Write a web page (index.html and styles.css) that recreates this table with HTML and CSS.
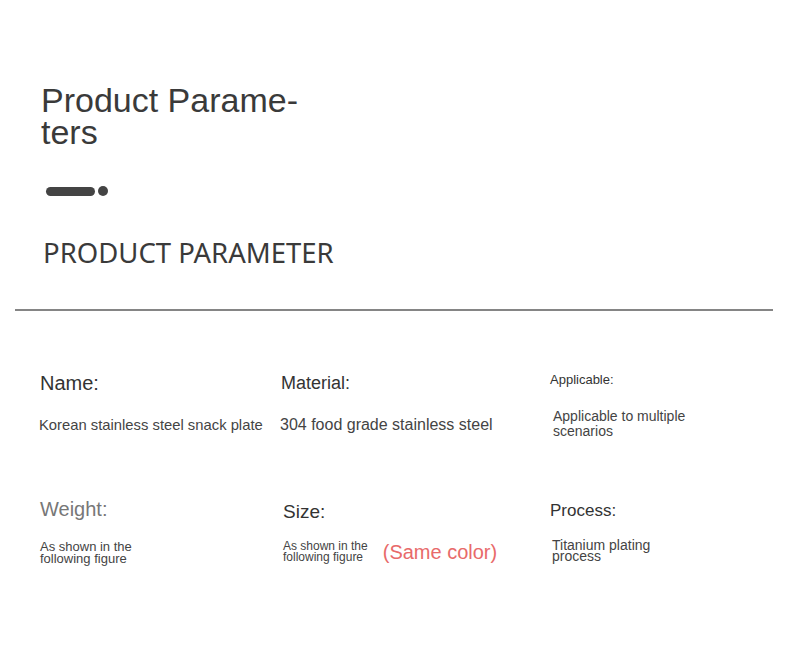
FILE: index.html
```html
<!DOCTYPE html>
<html lang="en">
<head>
<meta charset="utf-8">
<title>Product Parameters</title>
<link rel="stylesheet" href="styles.css">
</head>
<body>
<div class="page">
  <header class="head">
    <h1 class="title">Product Parame&shy;ters</h1>
    <div class="dash"><span class="pill"></span><span class="dot"></span></div>
    <h2 class="subtitle">PRODUCT PARAMETER</h2>
  </header>
  <hr class="divider">
  <section class="params">
    <div class="cell">
      <div class="label label-name">Name:</div>
      <div class="value value-name">Korean stainless steel snack plate</div>
    </div>
    <div class="cell">
      <div class="label label-material">Material:</div>
      <div class="value value-material">304 food grade stainless steel</div>
    </div>
    <div class="cell">
      <div class="label label-applicable">Applicable:</div>
      <div class="value value-applicable">Applicable to multiple<br>scenarios</div>
    </div>
    <div class="cell">
      <div class="label label-weight">Weight:</div>
      <div class="value value-weight">As shown in the<br>following figure</div>
    </div>
    <div class="cell cell-size">
      <div class="label label-size">Size:</div>
      <div class="size-row">
        <div class="value value-size">As shown in the<br>following figure</div>
        <div class="same-color">(Same color)</div>
      </div>
    </div>
    <div class="cell">
      <div class="label label-process">Process:</div>
      <div class="value value-process">Titanium plating<br>process</div>
    </div>
  </section>
</div>
</body>
</html>
```

FILE: styles.css
```css
html, body {
  margin: 0;
  padding: 0;
  background: #ffffff;
}

body {
  font-family: "Liberation Sans", Arial, sans-serif;
  color: #333333;
}

.page {
  width: 790px;
  min-height: 649px;
}

.head {
  padding-left: 41px;
  display: flex;
  flex-direction: column;
  align-items: flex-start;
}

.title {
  margin: 84px 0 0 0;
  width: 270px;
  font-size: 34px;
  line-height: 32px;
  font-weight: normal;
  color: #3a3a3a;
  hyphens: manual;
}

.dash {
  display: flex;
  align-items: center;
  margin: 38px 0 0 5px;
}

.pill {
  width: 49px;
  height: 9px;
  border-radius: 5px;
  background: #444444;
}

.dot {
  width: 10px;
  height: 10px;
  border-radius: 50%;
  background: #444444;
  margin-left: 3px;
}

.subtitle {
  margin: 43px 0 0 2px;
  font-family: "Noto Sans", "Open Sans", sans-serif;
  font-size: 27.5px;
  line-height: 27px;
  font-weight: normal;
  color: #3a3a3a;
  letter-spacing: 0;
}

.divider {
  margin: 43px 17px 0 15px;
  height: 2px;
  border: 0;
  background: #858585;
}

.params {
  display: grid;
  grid-template-columns: 241px 269px 1fr;
  grid-template-rows: 129px auto;
  padding: 57px 0 0 40px;
}

.cell {
  display: flex;
  flex-direction: column;
  align-items: flex-start;
}

.label {
  line-height: 24px;
  color: #333333;
}

.value {
  color: #444444;
}

.label-name { font-size: 20px; margin-top: 3px; }
.value-name { font-size: 14.8px; line-height: 18px; margin: 21px 0 0 -1px; }

.label-material { font-size: 18px; margin-top: 3px; }
.value-material { font-size: 16px; line-height: 18px; margin: 21px 0 0 -1px; }

.label-applicable { font-size: 13px; margin-top: 0; }
.value-applicable { font-size: 14px; line-height: 15px; margin: 17px 0 0 3px; }

.label-weight { font-size: 20px; color: #777777; }
.value-weight { font-size: 13px; line-height: 12px; margin-top: 20px; }

.cell-size { padding-left: 2px; }
.label-size { font-size: 19px; margin-top: 3px; }
.size-row {
  display: flex;
  align-items: center;
  margin-top: 16px;
}
.value-size { font-size: 12px; line-height: 11px; }
.same-color {
  font-size: 20px;
  line-height: 24px;
  color: #e86a6a;
  margin-left: 15px;
}

.label-process { font-size: 17px; margin-top: 2px; }
.value-process { font-size: 14px; line-height: 11px; margin: 17px 0 0 2px; }
```
